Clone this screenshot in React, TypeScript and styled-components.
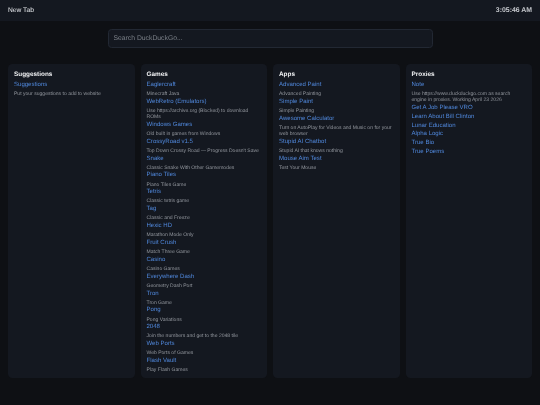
import React from 'react';
import styled, { createGlobalStyle } from 'styled-components';

const GlobalStyle = createGlobalStyle`
	html, body {
		margin: 0;
		padding: 0;
		background: #0e1014;
		font-family: 'Liberation Sans', Arial, sans-serif;
		text-rendering: geometricPrecision;
	}
`;

const Page = styled.div`
	min-height: 405px;
	background: #0e1014;
	filter: blur(0.3px);
`;

const TopBar = styled.header`
	height: 21px;
	padding: 0 8px;
	background: #141820;
	display: flex;
	align-items: center;
	justify-content: space-between;
	color: #e6e8ec;
	font-size: 6.7px;
`;

const Clock = styled.span`
	font-weight: bold;
	font-size: 6.9px;
	color: #c6c9ce;
`;

const SearchRow = styled.div`
	display: flex;
	justify-content: center;
	padding-top: 8px;
`;

const SearchInput = styled.input`
	box-sizing: border-box;
	width: 325px;
	height: 19px;
	padding: 0 5px;
	background: #141820;
	border: 0.5px solid #222833;
	border-radius: 3.5px;
	color: #d5d9df;
	font-family: inherit;
	font-size: 6.8px;
	text-rendering: geometricPrecision;
	outline: none;
	&::placeholder {
		color: #7b8088;
	}
`;

const Columns = styled.main`
	display: grid;
	grid-template-columns: repeat(4, 126.5px);
	gap: 6px;
	padding: 16px 8px 0;
`;

const Panel = styled.section`
	box-sizing: border-box;
	height: 314px;
	padding: 6.5px 6px;
	background: #141820;
	border-radius: 4.5px;
`;

const Title = styled.h2`
	margin: 0 0 3.5px;
	color: #f2f3f5;
	font-size: 6.4px;
	line-height: 8px;
	font-weight: bold;
`;

const Item = styled.div`
	margin-bottom: 1.35px;
`;

const ItemLink = styled.a`
	display: block;
	color: #5088dc;
	font-size: 6.05px;
	line-height: 7.5px;
`;

const ItemText = styled.p`
	margin: 1.7px 0 0;
	padding-bottom: 0.35px;
	color: #92969d;
	font-size: 5.05px;
	line-height: 6px;
`;

type Entry = { name: string; text?: string };
type Group = { title: string; entries: Entry[] };

const groups: Group[] = [
	{
		title: 'Suggestions',
		entries: [{ name: 'Suggestions', text: 'Put your suggestions to add to website' }],
	},
	{
		title: 'Games',
		entries: [
			{ name: 'Eaglercraft', text: 'Minecraft Java' },
			{ name: 'WebRetro (Emulators)', text: 'Use https://archive.org (Blocked) to download ROMs' },
			{ name: 'Windows Games', text: 'Old built in games from Windows' },
			{ name: 'CrossyRoad v1.5', text: "Top Down Crossy Road — Progress Doesn't Save" },
			{ name: 'Snake', text: 'Classic Snake With Other Gamemodes' },
			{ name: 'Piano Tiles', text: 'Piano Tiles Game' },
			{ name: 'Tetris', text: 'Classic tetris game' },
			{ name: 'Tag', text: 'Classic and Freeze' },
			{ name: 'Hexic HD', text: 'Marathon Mode Only' },
			{ name: 'Fruit Crush', text: 'Match Three Game' },
			{ name: 'Casino', text: 'Casino Games' },
			{ name: 'Everywhere Dash', text: 'Geometry Dash Port' },
			{ name: 'Tron', text: 'Tron Game' },
			{ name: 'Pong', text: 'Pong Variations' },
			{ name: '2048', text: 'Join the numbers and get to the 2048 tile' },
			{ name: 'Web Ports', text: 'Web Ports of Games' },
			{ name: 'Flash Vault', text: 'Play Flash Games' },
		],
	},
	{
		title: 'Apps',
		entries: [
			{ name: 'Advanced Paint', text: 'Advanced Painting' },
			{ name: 'Simple Paint', text: 'Simple Painting' },
			{ name: 'Awesome Calculator', text: 'Turn on AutoPlay for Videos and Music on for your web browser' },
			{ name: 'Stupid AI Chatbot', text: 'Stupid AI that knows nothing' },
			{ name: 'Mouse Aim Test', text: 'Test Your Mouse' },
		],
	},
	{
		title: 'Proxies',
		entries: [
			{ name: 'Note', text: 'Use https://www.duckduckgo.com as search engine in proxies. Working April 23 2026' },
			{ name: 'Get A Job Please VRO' },
			{ name: 'Learn About Bill Clinton' },
			{ name: 'Lunar Education' },
			{ name: 'Alpha Logic' },
			{ name: 'True Bio' },
			{ name: 'True Poems' },
		],
	},
];

export default function App() {
	return (
		<Page>
			<GlobalStyle />
			<TopBar>
				<span>New Tab</span>
				<Clock>3:05:46 AM</Clock>
			</TopBar>
			<SearchRow>
				<SearchInput placeholder='Search DuckDuckGo...' />
			</SearchRow>
			<Columns>
				{groups.map((group) => (
					<Panel key={group.title}>
						<Title>{group.title}</Title>
						{group.entries.map((entry) => (
							<Item key={entry.name}>
								<ItemLink>{entry.name}</ItemLink>
								{entry.text && <ItemText>{entry.text}</ItemText>}
							</Item>
						))}
					</Panel>
				))}
			</Columns>
		</Page>
	);
}
